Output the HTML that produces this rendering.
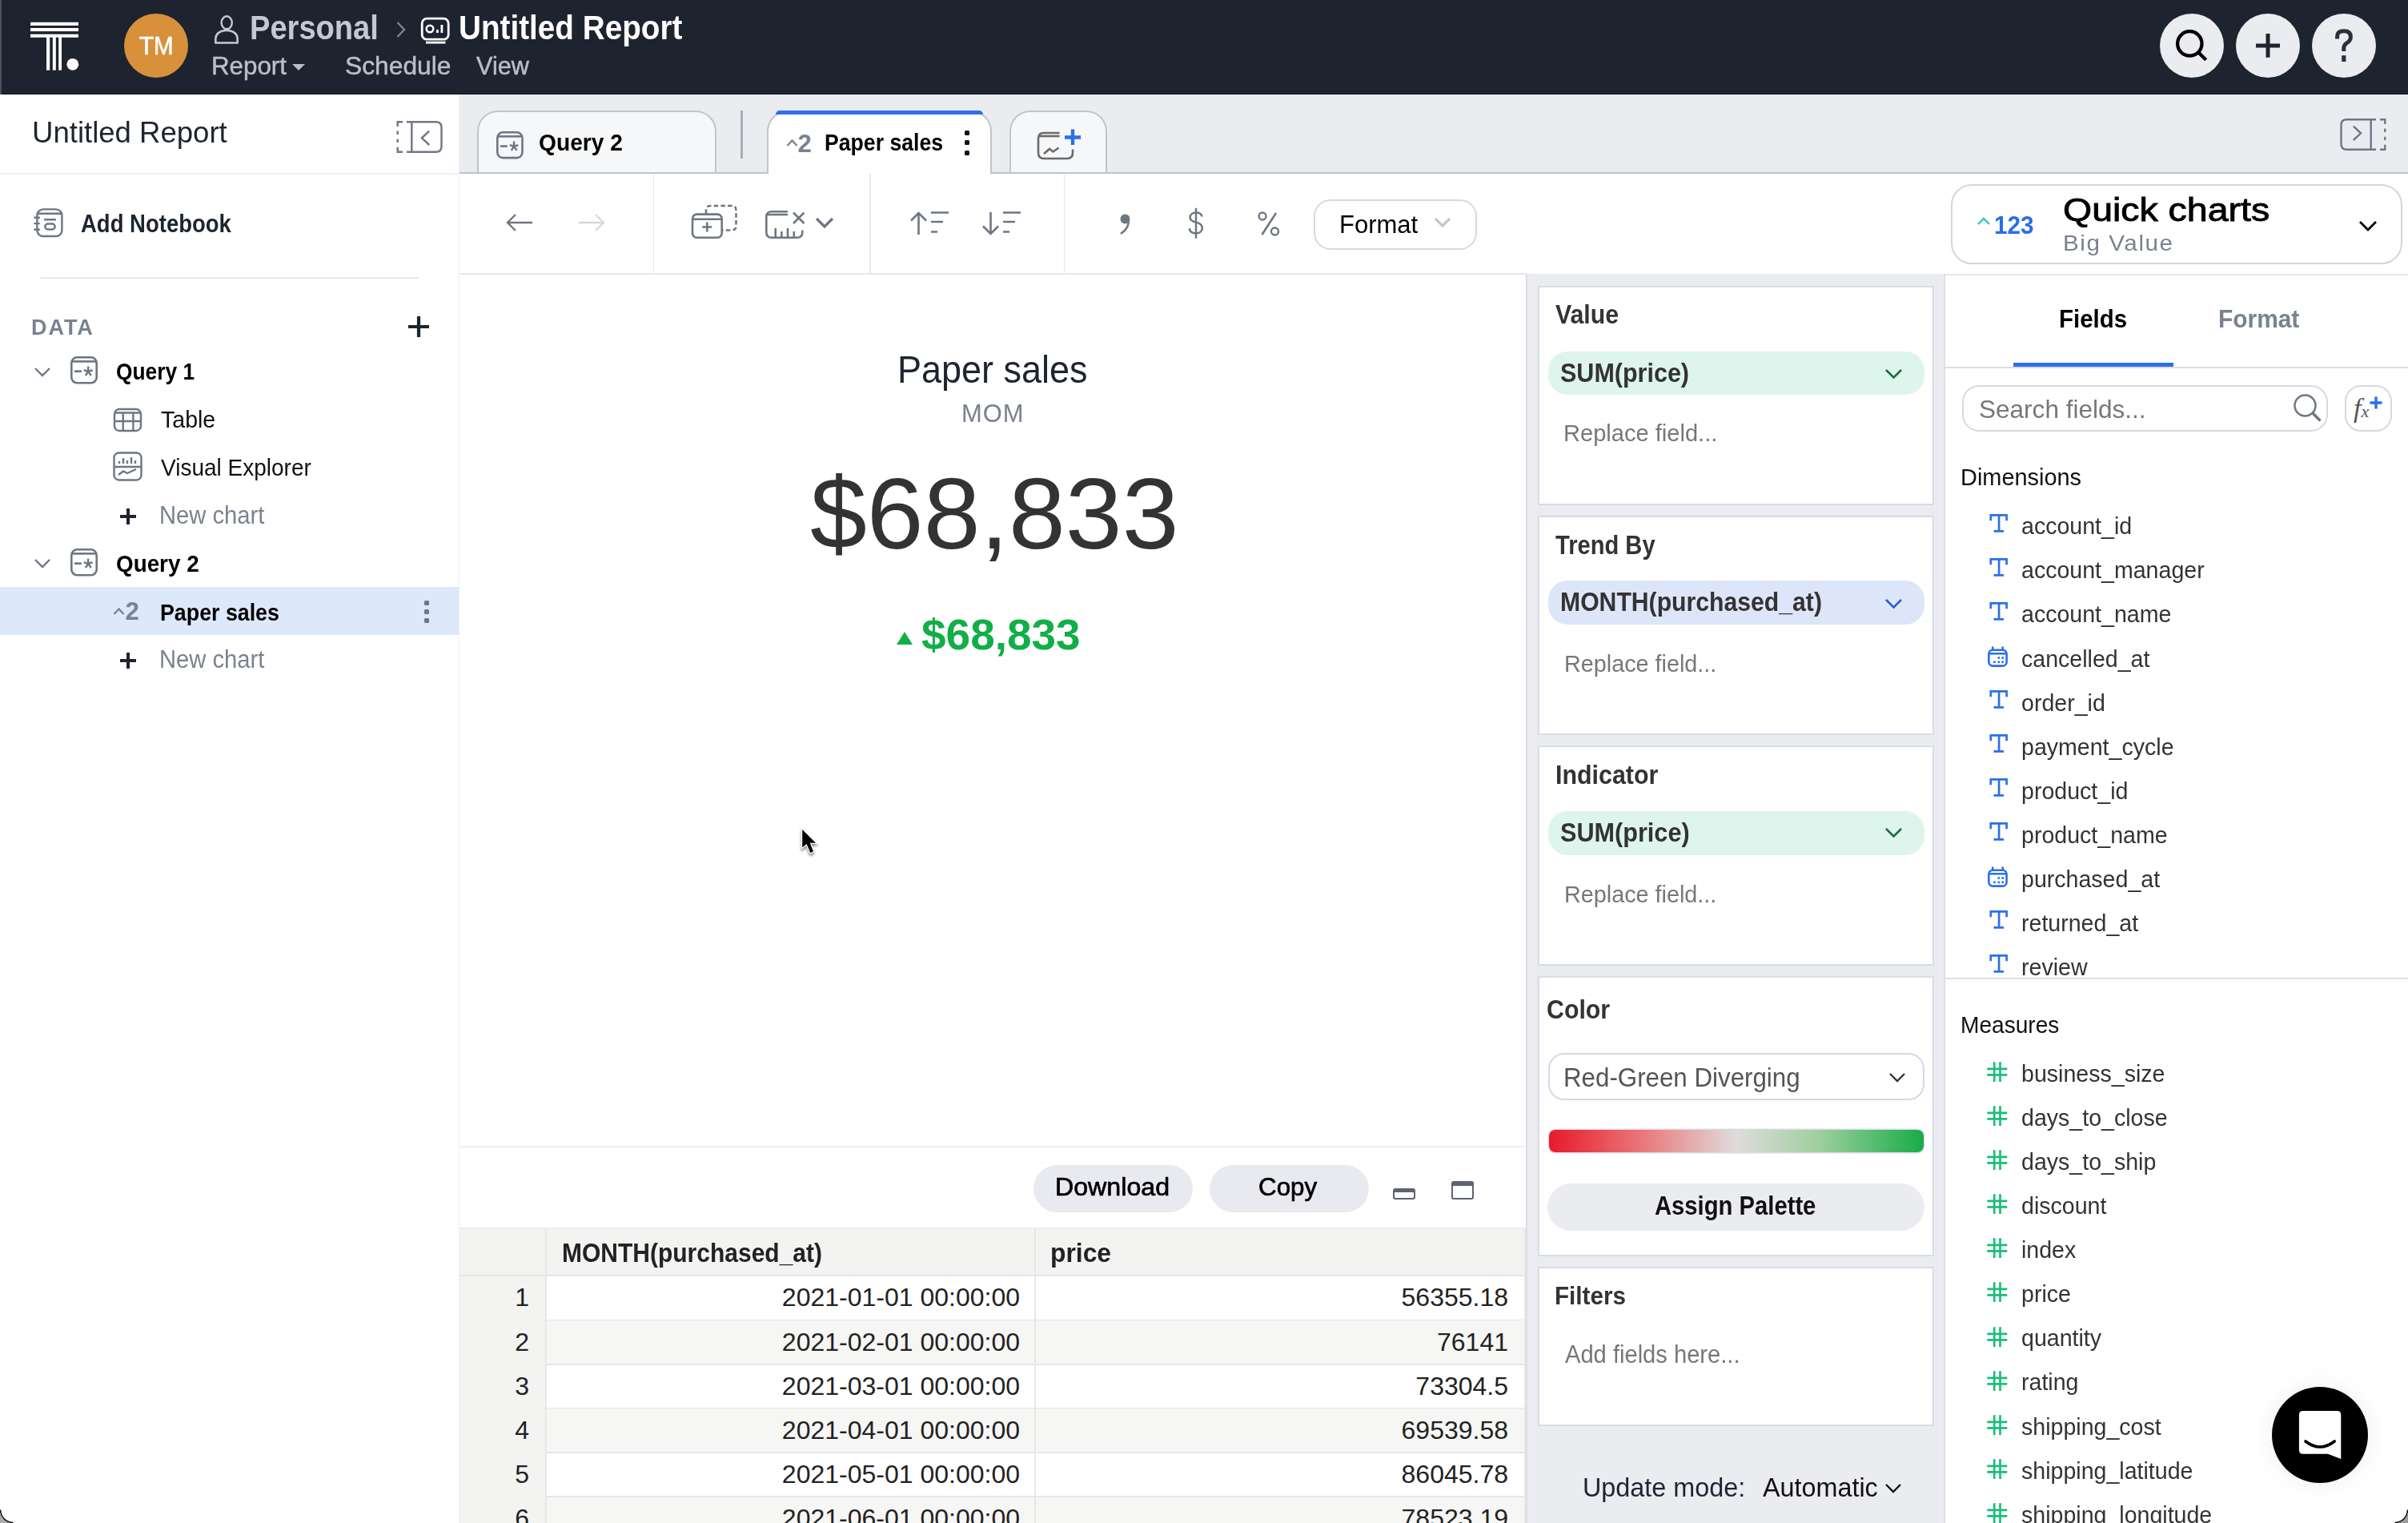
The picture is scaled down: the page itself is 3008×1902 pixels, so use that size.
<!DOCTYPE html>
<html><head><meta charset="utf-8"><style>
html,body{margin:0;padding:0;width:3008px;height:1902px;overflow:hidden;background:#fff;}
body{position:relative;font-family:"Liberation Sans",sans-serif;}
body>div,body>svg{position:absolute;box-sizing:border-box;}
.t{white-space:nowrap;transform-origin:0 0;}
</style></head><body>
<div style="left:0px;top:0px;width:3008px;height:118px;background:#1e2330;"></div>
<div style="left:0px;top:117px;width:3008px;height:1px;background:#10131b;"></div>
<div style="left:0px;top:0px;width:2px;height:118px;background:#4b505c;"></div>
<svg style="left:0;top:0" width="110" height="100" viewBox="0 0 110 100"><rect x="38" y="27.8" width="60" height="4.1" fill="#fff"/><rect x="38" y="35" width="60" height="4.1" fill="#fff"/><rect x="38" y="42.7" width="60" height="4.1" fill="#fff"/><rect x="58" y="45" width="4.2" height="42.7" fill="#fff"/><rect x="65.8" y="46" width="4" height="41.7" fill="#fff"/><rect x="73.2" y="46" width="3.8" height="41.7" fill="#fff"/><circle cx="90.8" cy="80.3" r="7.4" fill="#fff"/></svg>
<div style="left:155px;top:17px;width:80px;height:80px;background:#d8913a;border-radius:50%;"></div>
<div id="hTM" class="t" style="left:174.00px;top:41.55px;font-size:31px;line-height:31px;color:#fff;font-weight:400;transform:scaleX(0.9540);-webkit-text-stroke:0.6px #fff;">TM</div>
<svg style="left:266px;top:18px;" width="34" height="38" viewBox="0 0 34 38" fill="none"><ellipse cx="17.2" cy="10.3" rx="6.6" ry="8" stroke="#c3c8d1" stroke-width="2.4"/><path d="M3.3 35.5 V31 C3.3 24 9 20 17 20 C25 20 30.7 24 30.7 31 V35.5 Z" stroke="#c3c8d1" stroke-width="2.6" stroke-linejoin="round"/></svg>
<div id="hPersonal" class="t" style="left:312.23px;top:13.39px;font-size:43px;line-height:43px;color:#c3c8d1;font-weight:700;transform:scaleX(0.8854);">Personal</div>
<svg style="left:492px;top:24px;" width="18" height="26" viewBox="0 0 18 26" fill="none"><path d="M4.5 4 L13 13 L4.5 22" stroke="#7d838f" stroke-width="2.4"/></svg>
<svg style="left:524px;top:20px;" width="40" height="38" viewBox="0 0 40 38" fill="none"><rect x="3.2" y="3.2" width="33" height="26" rx="6" stroke="#fff" stroke-width="2.8"/><circle cx="13" cy="16" r="4.3" stroke="#fff" stroke-width="2.6"/><rect x="21" y="17" width="2.8" height="4" fill="#fff"/><rect x="26.5" y="11" width="2.8" height="10" fill="#fff"/><rect x="8" y="31.7" width="24.5" height="2.8" fill="#fff"/></svg>
<div id="hTitle" class="t" style="left:573.11px;top:13.39px;font-size:43px;line-height:43px;color:#fff;font-weight:700;transform:scaleX(0.8997);">Untitled Report</div>
<div id="hReport" class="t" style="left:264.02px;top:65.61px;font-size:32px;line-height:32px;color:#b9bfca;font-weight:400;transform:scaleX(0.9787);-webkit-text-stroke:0.5px #b9bfca;">Report</div>
<svg style="left:364px;top:79px;" width="18" height="10" viewBox="0 0 18 10" fill="none"><path d="M1 1 L17 1 L9 9 Z" fill="#b9bfca"/></svg>
<div id="hSched" class="t" style="left:430.94px;top:65.61px;font-size:32px;line-height:32px;color:#b9bfca;font-weight:400;transform:scaleX(0.9926);-webkit-text-stroke:0.5px #b9bfca;">Schedule</div>
<div id="hView" class="t" style="left:594.97px;top:65.61px;font-size:32px;line-height:32px;color:#b9bfca;font-weight:400;transform:scaleX(0.9574);-webkit-text-stroke:0.5px #b9bfca;">View</div>
<div style="left:2698px;top:17px;width:80px;height:80px;background:#ebecf0;border-radius:50%;"></div>
<div style="left:2793px;top:17px;width:80px;height:80px;background:#ebecf0;border-radius:50%;"></div>
<div style="left:2888px;top:17px;width:80px;height:80px;background:#ebecf0;border-radius:50%;"></div>
<svg style="left:2715px;top:34px;" width="48" height="48" viewBox="0 0 48 48" fill="none"><circle cx="20.3" cy="20.4" r="15.2" stroke="#000" stroke-width="4.3"/><path d="M31 31.3 L40.7 40.7" stroke="#000" stroke-width="4.3"/></svg>
<svg style="left:2811px;top:35px;" width="44" height="44" viewBox="0 0 44 44" fill="none"><path d="M22 7 V36.8 M7 21.9 H37" stroke="#1e2430" stroke-width="5"/></svg>
<svg style="left:2900px;top:30px;" width="56" height="56" viewBox="0 0 56 56" fill="none"><path d="M19.6 18.5 V15.3 Q19.6 8.8 28 8.8 Q36.4 8.8 36.4 16 Q36.4 20.8 32 23.3 Q27.8 25.8 27.8 30.5 V34" stroke="#2b303b" stroke-width="5"/><rect x="25.2" y="39.2" width="5.2" height="7.8" fill="#2b303b"/></svg>
<div style="left:0px;top:118px;width:574px;height:1784px;background:#fff;"></div>
<div style="left:573px;top:118px;width:1px;height:1784px;background:#eef0f3;"></div>
<div id="sTitle" class="t" style="left:40.00px;top:146.67px;font-size:37px;line-height:37px;color:#1e2430;font-weight:400;transform:scaleX(0.9878);">Untitled Report</div>
<div style="left:0px;top:216px;width:573px;height:2px;background:#eef0f4;"></div>
<div id="sAddNb" class="t" style="left:101.00px;top:263.55px;font-size:31px;line-height:31px;color:#1e2430;font-weight:700;transform:scaleX(0.8868);">Add Notebook</div>
<div style="left:50px;top:346px;width:473px;height:2px;background:#e8eaf0;"></div>
<div id="sData" class="t" style="left:39.02px;top:394.47px;font-size:28.5px;line-height:28.5px;color:#7a8290;font-weight:700;letter-spacing:2px;transform:scaleX(0.9498);">DATA</div>
<div style="left:0px;top:732.5px;width:573px;height:60.5px;background:#dde8fa;"></div>
<div id="sQ1" class="t" style="left:145.07px;top:448.92px;font-size:29.5px;line-height:29.5px;color:#000;font-weight:700;transform:scaleX(0.8939);">Query 1</div>
<div id="sTable" class="t" style="left:200.86px;top:508.72px;font-size:29.5px;line-height:29.5px;color:#111;font-weight:400;transform:scaleX(0.9674);">Table</div>
<div id="sVE" class="t" style="left:200.85px;top:568.92px;font-size:29.5px;line-height:29.5px;color:#111;font-weight:400;transform:scaleX(0.9493);">Visual Explorer</div>
<div id="sNC1" class="t" style="left:199.07px;top:627.75px;font-size:31px;line-height:31px;color:#7a8290;font-weight:400;transform:scaleX(0.9417);">New chart</div>
<div id="sQ2" class="t" style="left:145.05px;top:689.00px;font-size:30px;line-height:30px;color:#000;font-weight:700;transform:scaleX(0.9273);">Query 2</div>
<div id="sPS" class="t" style="left:200.02px;top:749.82px;font-size:29.5px;line-height:29.5px;color:#000;font-weight:700;transform:scaleX(0.9080);">Paper sales</div>
<div id="sNC2" class="t" style="left:199.07px;top:807.75px;font-size:31px;line-height:31px;color:#7a8290;font-weight:400;transform:scaleX(0.9417);">New chart</div>
<div style="left:574px;top:118px;width:2434px;height:99px;background:#ebecf0;"></div>
<div style="left:574px;top:215px;width:2434px;height:2.5px;background:#bfc4cc;"></div>
<div style="left:595.5px;top:138px;width:299px;height:77px;background:#f6f7f9;border:2px solid #bfc4cc;border-bottom:none;border-radius:26px 26px 0 0;"></div>
<div id="tQ2" class="t" style="left:673.02px;top:164.45px;font-size:29px;line-height:29px;color:#000;font-weight:700;transform:scaleX(0.9717);">Query 2</div>
<div style="left:924.5px;top:138px;width:3.5px;height:60px;background:#a9aeb8;"></div>
<div style="left:958px;top:138px;width:281px;height:80px;background:#fff;border:2px solid #bfc4cc;border-bottom:none;border-radius:26px 26px 0 0;"></div>
<div style="left:969px;top:137.5px;width:259px;height:5px;background:#2c6fec;border-radius:5px 5px 0 0;"></div>
<div id="tPS" class="t" style="left:1030.05px;top:164.45px;font-size:29px;line-height:29px;color:#000;font-weight:700;transform:scaleX(0.9183);">Paper sales</div>
<div style="left:1261px;top:138px;width:122px;height:77px;background:#f6f7f9;border:2px solid #bfc4cc;border-bottom:none;border-radius:26px 26px 0 0;"></div>
<div style="left:574px;top:217px;width:2434px;height:125px;background:#fff;"></div>
<div style="left:574px;top:340.5px;width:1332px;height:2px;background:#e6e8ed;"></div>
<div style="left:815.5px;top:217px;width:1.5px;height:124px;background:#e6e8ed;"></div>
<div style="left:1086px;top:217px;width:1.5px;height:124px;background:#e6e8ed;"></div>
<div style="left:1328.5px;top:217px;width:1.5px;height:124px;background:#e6e8ed;"></div>
<div style="left:1640.5px;top:248.5px;width:204px;height:63px;border:2px solid #d6d9e0;border-radius:21px;background:#fff;"></div>
<div id="tbFormat" class="t" style="left:1672.93px;top:264.75px;font-size:31px;line-height:31px;color:#000;font-weight:400;transform:scaleX(1.0001);">Format</div>
<div style="left:2436.5px;top:230px;width:564px;height:99.5px;border:2px solid #d3d6dd;border-radius:26px;background:#fff;"></div>
<div id="qc123" class="t" style="left:2491.08px;top:266.15px;font-size:31px;line-height:31px;color:#2b6de8;font-weight:700;transform:scaleX(0.9592);">123</div>
<div id="qcTitle" class="t" style="left:2576.80px;top:241.79px;font-size:41px;line-height:41px;color:#000;font-weight:400;transform:scaleX(1.1328);-webkit-text-stroke:0.9px #000;">Quick charts</div>
<div id="qcSub" class="t" style="left:2576.88px;top:288.87px;font-size:28.5px;line-height:28.5px;color:#7a8290;font-weight:400;letter-spacing:1.5px;transform:scaleX(1.0389);">Big Value</div>
<div id="cTitle" class="t" style="left:1121.12px;top:437.78px;font-size:47.5px;line-height:47.5px;color:#1e2430;font-weight:400;transform:scaleX(0.9472);">Paper sales</div>
<div id="cMOM" class="t" style="left:1200.89px;top:500.98px;font-size:30.5px;line-height:30.5px;color:#7a8290;font-weight:400;letter-spacing:1px;transform:scaleX(1.0139);">MOM</div>
<div id="cBig" class="t" style="left:1011.97px;top:578.72px;font-size:126px;line-height:126px;color:#333;font-weight:400;transform:scaleX(1.0111);">$68,833</div>
<svg style="left:1119px;top:788px;" width="22" height="18" viewBox="0 0 22 18" fill="none"><path d="M1 17 L11 1 L21 17 Z" fill="#12ae48"/></svg>
<div id="cGreen" class="t" style="left:1150.93px;top:766.12px;font-size:53px;line-height:53px;color:#12ae48;font-weight:700;transform:scaleX(1.0369);">$68,833</div>
<div style="left:574px;top:1431px;width:1332px;height:2px;background:#eef0f2;"></div>
<div style="left:1290.5px;top:1455px;width:199px;height:58.5px;background:#e9eaef;border-radius:30px;"></div>
<div id="bDl" class="t" style="left:1317.94px;top:1466.11px;font-size:32px;line-height:32px;color:#000;font-weight:400;transform:scaleX(1.0051);-webkit-text-stroke:0.7px #000;">Download</div>
<div style="left:1510.5px;top:1455px;width:199px;height:58.5px;background:#e9eaef;border-radius:30px;"></div>
<div id="bCopy" class="t" style="left:1572.00px;top:1466.11px;font-size:32px;line-height:32px;color:#000;font-weight:400;transform:scaleX(0.9796);-webkit-text-stroke:0.7px #000;">Copy</div>
<div style="left:574px;top:1533px;width:1332px;height:369px;background:#fff;"></div>
<div style="left:574px;top:1533px;width:1332px;height:1.5px;background:#eceeee;"></div>
<div style="left:574px;top:1534.5px;width:1332px;height:58px;background:#f3f3f2;"></div>
<div style="left:574px;top:1534.5px;width:107.5px;height:368px;background:#f3f3f2;"></div>
<div style="left:574px;top:1591.5px;width:1332px;height:2px;background:#e7e7e5;"></div>
<div id="thM" class="t" style="left:702.19px;top:1546.81px;font-size:34px;line-height:34px;color:#222;font-weight:700;transform:scaleX(0.8822);">MONTH(purchased_at)</div>
<div id="thP" class="t" style="left:1312.11px;top:1546.81px;font-size:34px;line-height:34px;color:#222;font-weight:700;transform:scaleX(0.9359);">price</div>
<div style="left:683px;top:1647.5px;width:1223px;height:2px;background:#e7e7e5;"></div>
<div class="t" style="left:574px;width:87px;text-align:right;top:1604.4px;font-size:32px;line-height:32px;color:#222;">1</div>
<div class="t" style="left:683px;width:591px;text-align:right;top:1604.4px;font-size:32px;line-height:32px;color:#222;">2021-01-01 00:00:00</div>
<div class="t" style="left:1294px;width:590px;text-align:right;top:1604.4px;font-size:32px;line-height:32px;color:#222;">56355.18</div>
<div style="left:683px;top:1648.7px;width:1223px;height:54px;background:#f6f6f4;"></div>
<div style="left:683px;top:1702.7px;width:1223px;height:2px;background:#e7e7e5;"></div>
<div class="t" style="left:574px;width:87px;text-align:right;top:1659.6px;font-size:32px;line-height:32px;color:#222;">2</div>
<div class="t" style="left:683px;width:591px;text-align:right;top:1659.6px;font-size:32px;line-height:32px;color:#222;">2021-02-01 00:00:00</div>
<div class="t" style="left:1294px;width:590px;text-align:right;top:1659.6px;font-size:32px;line-height:32px;color:#222;">76141</div>
<div style="left:683px;top:1757.9px;width:1223px;height:2px;background:#e7e7e5;"></div>
<div class="t" style="left:574px;width:87px;text-align:right;top:1714.8px;font-size:32px;line-height:32px;color:#222;">3</div>
<div class="t" style="left:683px;width:591px;text-align:right;top:1714.8px;font-size:32px;line-height:32px;color:#222;">2021-03-01 00:00:00</div>
<div class="t" style="left:1294px;width:590px;text-align:right;top:1714.8px;font-size:32px;line-height:32px;color:#222;">73304.5</div>
<div style="left:683px;top:1759.1px;width:1223px;height:54px;background:#f6f6f4;"></div>
<div style="left:683px;top:1813.1px;width:1223px;height:2px;background:#e7e7e5;"></div>
<div class="t" style="left:574px;width:87px;text-align:right;top:1770.0px;font-size:32px;line-height:32px;color:#222;">4</div>
<div class="t" style="left:683px;width:591px;text-align:right;top:1770.0px;font-size:32px;line-height:32px;color:#222;">2021-04-01 00:00:00</div>
<div class="t" style="left:1294px;width:590px;text-align:right;top:1770.0px;font-size:32px;line-height:32px;color:#222;">69539.58</div>
<div style="left:683px;top:1868.3px;width:1223px;height:2px;background:#e7e7e5;"></div>
<div class="t" style="left:574px;width:87px;text-align:right;top:1825.2px;font-size:32px;line-height:32px;color:#222;">5</div>
<div class="t" style="left:683px;width:591px;text-align:right;top:1825.2px;font-size:32px;line-height:32px;color:#222;">2021-05-01 00:00:00</div>
<div class="t" style="left:1294px;width:590px;text-align:right;top:1825.2px;font-size:32px;line-height:32px;color:#222;">86045.78</div>
<div style="left:683px;top:1869.5px;width:1223px;height:54px;background:#f6f6f4;"></div>
<div style="left:683px;top:1923.5px;width:1223px;height:2px;background:#e7e7e5;"></div>
<div class="t" style="left:574px;width:87px;text-align:right;top:1880.4px;font-size:32px;line-height:32px;color:#222;">6</div>
<div class="t" style="left:683px;width:591px;text-align:right;top:1880.4px;font-size:32px;line-height:32px;color:#222;">2021-06-01 00:00:00</div>
<div class="t" style="left:1294px;width:590px;text-align:right;top:1880.4px;font-size:32px;line-height:32px;color:#222;">78523.19</div>
<div style="left:681px;top:1534.5px;width:2px;height:368px;background:#e7e7e5;"></div>
<div style="left:1292.4px;top:1534.5px;width:2px;height:368px;background:#e7e7e5;"></div>
<div style="left:1903.5px;top:1534.5px;width:2px;height:368px;background:#e7e7e5;"></div>
<div style="left:1906px;top:342px;width:524px;height:1560px;background:#ebecf0;"></div>
<div style="left:1906px;top:342px;width:2px;height:1560px;background:#dcdfe5;"></div>
<div style="left:2428px;top:342px;width:2px;height:1560px;background:#dcdfe5;"></div>
<div style="left:1920.5px;top:356.5px;width:495px;height:274.0px;background:#fff;border:2px solid #d8dce6;"></div>
<div style="left:1920.5px;top:644px;width:495px;height:273.5px;background:#fff;border:2px solid #d8dce6;"></div>
<div style="left:1920.5px;top:931px;width:495px;height:275px;background:#fff;border:2px solid #d8dce6;"></div>
<div style="left:1920.5px;top:1219px;width:495px;height:349.5px;background:#fff;border:2px solid #d8dce6;"></div>
<div style="left:1920.5px;top:1581.5px;width:495px;height:199.0px;background:#fff;border:2px solid #d8dce6;"></div>
<div id="cfVal" class="t" style="left:1943.00px;top:376.06px;font-size:33px;line-height:33px;color:#333;font-weight:700;transform:scaleX(0.9178);">Value</div>
<div style="left:1933.5px;top:438.5px;width:470px;height:54px;background:#def5ed;border-radius:24px;"></div>
<div id="cfSum1" class="t" style="left:1948.96px;top:448.76px;font-size:33px;line-height:33px;color:#333;font-weight:700;transform:scaleX(0.9245);">SUM(price)</div>
<div id="cfR1" class="t" style="left:1953.05px;top:526.20px;font-size:30px;line-height:30px;color:#777;font-weight:400;transform:scaleX(0.9691);">Replace field...</div>
<div id="cfTrend" class="t" style="left:1943.16px;top:663.56px;font-size:33px;line-height:33px;color:#333;font-weight:700;transform:scaleX(0.8823);">Trend By</div>
<div style="left:1933.5px;top:725.2px;width:470px;height:54.6px;background:#dde6f8;border-radius:24px;"></div>
<div id="cfMonth" class="t" style="left:1948.78px;top:735.26px;font-size:33px;line-height:33px;color:#333;font-weight:700;transform:scaleX(0.9144);">MONTH(purchased_at)</div>
<div id="cfR2" class="t" style="left:1954.05px;top:813.60px;font-size:30px;line-height:30px;color:#777;font-weight:400;transform:scaleX(0.9588);">Replace field...</div>
<div id="cfInd" class="t" style="left:1942.66px;top:951.06px;font-size:33px;line-height:33px;color:#333;font-weight:700;transform:scaleX(0.9212);">Indicator</div>
<div style="left:1933.5px;top:1013px;width:470px;height:54.5px;background:#def5ed;border-radius:24px;"></div>
<div id="cfSum2" class="t" style="left:1948.96px;top:1023.06px;font-size:33px;line-height:33px;color:#333;font-weight:700;transform:scaleX(0.9279);">SUM(price)</div>
<div id="cfR3" class="t" style="left:1954.05px;top:1101.60px;font-size:30px;line-height:30px;color:#777;font-weight:400;transform:scaleX(0.9588);">Replace field...</div>
<div id="cfColor" class="t" style="left:1932.04px;top:1243.56px;font-size:33px;line-height:33px;color:#333;font-weight:700;transform:scaleX(0.9180);">Color</div>
<div style="left:1933.5px;top:1315px;width:470px;height:59px;border:2px solid #d6d9e0;border-radius:20px;background:#fff;"></div>
<div id="cfRG" class="t" style="left:1953.06px;top:1328.76px;font-size:33px;line-height:33px;color:#555;font-weight:400;transform:scaleX(0.9481);">Red-Green Diverging</div>
<div style="left:1934.5px;top:1411px;width:468px;height:28px;border-radius:8px;background:linear-gradient(90deg,#e8192c 0%,#e9787a 25%,#e0dcdc 50%,#9fcf9f 72%,#18ab48 100%);box-shadow:0 0 0 1.5px #d9dce4;"></div>
<div style="left:1933px;top:1478px;width:470.5px;height:58.5px;background:#ebecf0;border-radius:30px;"></div>
<div id="cfAssign" class="t" style="left:2067.00px;top:1488.76px;font-size:33px;line-height:33px;color:#111;font-weight:700;transform:scaleX(0.8855);">Assign Palette</div>
<div id="cfFilters" class="t" style="left:1941.95px;top:1602.55px;font-size:31px;line-height:31px;color:#333;font-weight:700;transform:scaleX(0.9564);">Filters</div>
<div id="cfAdd" class="t" style="left:1955.00px;top:1676.25px;font-size:31px;line-height:31px;color:#777;font-weight:400;transform:scaleX(0.9391);">Add fields here...</div>
<div id="cfUpd" class="t" style="left:1976.96px;top:1840.56px;font-size:33px;line-height:33px;color:#1e2430;font-weight:400;transform:scaleX(0.9803);">Update mode:</div>
<div id="cfAuto" class="t" style="left:2202.00px;top:1840.56px;font-size:33px;line-height:33px;color:#111;font-weight:400;transform:scaleX(0.9795);">Automatic</div>
<div style="left:2430px;top:342px;width:578px;height:1560px;background:#fff;"></div>
<div style="left:2430px;top:342px;width:578px;height:2px;background:#e6e8ed;"></div>
<div id="fFields" class="t" style="left:2571.96px;top:382.98px;font-size:30.5px;line-height:30.5px;color:#000;font-weight:700;transform:scaleX(0.9654);">Fields</div>
<div id="fFormat" class="t" style="left:2771.02px;top:382.98px;font-size:30.5px;line-height:30.5px;color:#7a8290;font-weight:700;transform:scaleX(0.9802);">Format</div>
<div style="left:2430px;top:457.5px;width:578px;height:2px;background:#dcdfe6;"></div>
<div style="left:2515px;top:453px;width:200px;height:5px;background:#2c6fec;"></div>
<div style="left:2451px;top:480.5px;width:456.5px;height:58.5px;border:2px solid #d6d9e0;border-radius:21px;background:#fff;"></div>
<div id="fSearch" class="t" style="left:2471.94px;top:494.91px;font-size:32px;line-height:32px;color:#777;font-weight:400;transform:scaleX(0.9856);">Search fields...</div>
<div style="left:2929px;top:480.5px;width:58.5px;height:58.5px;border:2px solid #d6d9e0;border-radius:20px;background:#fff;"></div>
<div id="fDims" class="t" style="left:2449.02px;top:581.02px;font-size:29.5px;line-height:29.5px;color:#111;font-weight:400;transform:scaleX(0.9801);">Dimensions</div>
<div id="fd0" class="t" style="left:2525.00px;top:643.35px;font-size:29px;line-height:29px;color:#333;font-weight:400;transform:scaleX(0.9850);">account_id</div>
<div id="fd1" class="t" style="left:2525.00px;top:698.40px;font-size:29px;line-height:29px;color:#333;font-weight:400;transform:scaleX(0.9850);">account_manager</div>
<div id="fd2" class="t" style="left:2525.00px;top:753.45px;font-size:29px;line-height:29px;color:#333;font-weight:400;transform:scaleX(0.9850);">account_name</div>
<div id="fd3" class="t" style="left:2525.00px;top:808.50px;font-size:29px;line-height:29px;color:#333;font-weight:400;transform:scaleX(0.9850);">cancelled_at</div>
<div id="fd4" class="t" style="left:2525.00px;top:863.55px;font-size:29px;line-height:29px;color:#333;font-weight:400;transform:scaleX(0.9850);">order_id</div>
<div id="fd5" class="t" style="left:2525.00px;top:918.60px;font-size:29px;line-height:29px;color:#333;font-weight:400;transform:scaleX(0.9850);">payment_cycle</div>
<div id="fd6" class="t" style="left:2525.00px;top:973.65px;font-size:29px;line-height:29px;color:#333;font-weight:400;transform:scaleX(0.9850);">product_id</div>
<div id="fd7" class="t" style="left:2525.00px;top:1028.70px;font-size:29px;line-height:29px;color:#333;font-weight:400;transform:scaleX(0.9850);">product_name</div>
<div id="fd8" class="t" style="left:2525.00px;top:1083.75px;font-size:29px;line-height:29px;color:#333;font-weight:400;transform:scaleX(0.9850);">purchased_at</div>
<div id="fd9" class="t" style="left:2525.00px;top:1138.80px;font-size:29px;line-height:29px;color:#333;font-weight:400;transform:scaleX(0.9850);">returned_at</div>
<div id="fd10" class="t" style="left:2525.00px;top:1193.85px;font-size:29px;line-height:29px;color:#333;font-weight:400;transform:scaleX(0.9850);">review</div>
<div style="left:2430px;top:1221px;width:578px;height:681px;background:#fff;"></div>
<div style="left:2430px;top:1220.5px;width:578px;height:2px;background:#dcdfe6;"></div>
<div id="fMeas" class="t" style="left:2449.01px;top:1264.82px;font-size:29.5px;line-height:29.5px;color:#111;font-weight:400;transform:scaleX(0.9528);">Measures</div>
<div id="fm0" class="t" style="left:2525.00px;top:1326.75px;font-size:29px;line-height:29px;color:#333;font-weight:400;transform:scaleX(0.9850);">business_size</div>
<div id="fm1" class="t" style="left:2525.00px;top:1381.85px;font-size:29px;line-height:29px;color:#333;font-weight:400;transform:scaleX(0.9850);">days_to_close</div>
<div id="fm2" class="t" style="left:2525.00px;top:1436.95px;font-size:29px;line-height:29px;color:#333;font-weight:400;transform:scaleX(0.9850);">days_to_ship</div>
<div id="fm3" class="t" style="left:2525.00px;top:1492.05px;font-size:29px;line-height:29px;color:#333;font-weight:400;transform:scaleX(0.9850);">discount</div>
<div id="fm4" class="t" style="left:2525.00px;top:1547.15px;font-size:29px;line-height:29px;color:#333;font-weight:400;transform:scaleX(0.9850);">index</div>
<div id="fm5" class="t" style="left:2525.00px;top:1602.25px;font-size:29px;line-height:29px;color:#333;font-weight:400;transform:scaleX(0.9850);">price</div>
<div id="fm6" class="t" style="left:2525.00px;top:1657.35px;font-size:29px;line-height:29px;color:#333;font-weight:400;transform:scaleX(0.9850);">quantity</div>
<div id="fm7" class="t" style="left:2525.00px;top:1712.45px;font-size:29px;line-height:29px;color:#333;font-weight:400;transform:scaleX(0.9850);">rating</div>
<div id="fm8" class="t" style="left:2525.00px;top:1767.55px;font-size:29px;line-height:29px;color:#333;font-weight:400;transform:scaleX(0.9850);">shipping_cost</div>
<div id="fm9" class="t" style="left:2525.00px;top:1822.65px;font-size:29px;line-height:29px;color:#333;font-weight:400;transform:scaleX(0.9850);">shipping_latitude</div>
<div id="fm10" class="t" style="left:2525.00px;top:1877.75px;font-size:29px;line-height:29px;color:#333;font-weight:400;transform:scaleX(0.9850);">shipping_longitude</div>
<svg style="left:485px;top:140px;" width="80" height="60" viewBox="0 0 80 60" fill="none"><path d="M17.9 12.2 H11.7 V18.1 M11.7 23.6 V28.1 M11.7 33.7 V38 M11.7 43.7 V49.8 H17.9" stroke="#6f7683" stroke-width="2.4"/><path d="M23 12.2 H59.5 Q66.5 12.2 66.5 19.2 V42.8 Q66.5 49.8 59.5 49.8 H23 M29.3 12.2 V49.8" stroke="#6f7683" stroke-width="2.4"/><path d="M51.2 23.6 L41.9 32.3 L51.2 41" stroke="#6f7683" stroke-width="2.4"/></svg>
<svg style="left:40px;top:255px;" width="44" height="44" viewBox="0 0 44 44" fill="none"><rect x="6.4" y="6.4" width="31" height="33.6" rx="7.5" stroke="#6f7683" stroke-width="2.4"/><path d="M6.8 11.8 H37 M2.4 16.8 H9.8 M2.4 24.1 H9.8 M2.4 31.8 H9.8 M15.1 19.2 H29.9" stroke="#6f7683" stroke-width="2.4"/><rect x="16.3" y="24.5" width="12.4" height="7" rx="3.5" stroke="#6f7683" stroke-width="2.4"/></svg>
<svg style="left:508px;top:393px;" width="30" height="30" viewBox="0 0 30 30" fill="none"><path d="M15 2 V28 M2 15 H28" stroke="#1e2430" stroke-width="4.2"/></svg>
<svg style="left:41px;top:456.5px;" width="24" height="16" viewBox="0 0 24 16" fill="none"><path d="M3 3 L12 12 L21 3" stroke="#6f7683" stroke-width="2.4"/></svg>
<svg style="left:41px;top:696px;" width="24" height="16" viewBox="0 0 24 16" fill="none"><path d="M3 3 L12 12 L21 3" stroke="#6f7683" stroke-width="2.4"/></svg>
<svg style="left:86px;top:443.4px;" width="38" height="38" viewBox="0 0 38 38" fill="none"><g transform="translate(2 2) scale(1.0)"><rect x="1.3" y="1.3" width="31.4" height="32" rx="7" stroke="#6f7683" stroke-width="2.6"/><path d="M1.8 6.4 H32.2" stroke="#6f7683" stroke-width="2.6"/><path d="M4.9 18.7 H13.9" stroke="#6f7683" stroke-width="2.6"/><path d="M22.2 12.6 V18.9 M22.2 18.9 L16.8 17.3 M22.2 18.9 L27.6 17.3 M22.2 18.9 L18.9 24 M22.2 18.9 L25.7 24" stroke="#6f7683" stroke-width="2.4699999999999998" stroke-linecap="butt"/></g></svg>
<svg style="left:86px;top:683.4px;" width="38" height="38" viewBox="0 0 38 38" fill="none"><g transform="translate(2 2) scale(1.0)"><rect x="1.3" y="1.3" width="31.4" height="32" rx="7" stroke="#6f7683" stroke-width="2.6"/><path d="M1.8 6.4 H32.2" stroke="#6f7683" stroke-width="2.6"/><path d="M4.9 18.7 H13.9" stroke="#6f7683" stroke-width="2.6"/><path d="M22.2 12.6 V18.9 M22.2 18.9 L16.8 17.3 M22.2 18.9 L27.6 17.3 M22.2 18.9 L18.9 24 M22.2 18.9 L25.7 24" stroke="#6f7683" stroke-width="2.4699999999999998" stroke-linecap="butt"/></g></svg>
<svg style="left:141px;top:509px;" width="37" height="31" viewBox="0 0 37 31" fill="none"><rect x="2" y="2" width="33" height="27" rx="6" stroke="#6f7683" stroke-width="2.4"/><path d="M3 6.5 H34 M2 17 H35 M12.7 6.5 V29 M25.4 6.5 V29" stroke="#6f7683" stroke-width="2.4"/></svg>
<svg style="left:141px;top:564px;" width="37" height="37" viewBox="0 0 37 37" fill="none"><rect x="1.5" y="1.5" width="34" height="34" rx="6" stroke="#6f7683" stroke-width="2.4"/><path d="M2 19 H35" stroke="#6f7683" stroke-width="2.4"/><path d="M8 15 V12 M13 15 V8 M18 15 V11 M23 15 V7 M28 15 V11" stroke="#6f7683" stroke-width="2.4"/><path d="M7 29 L13 24.5 L18 27 L29 22" stroke="#6f7683" stroke-width="2.4"/></svg>
<svg style="left:148px;top:632.5px;" width="24" height="24" viewBox="0 0 24 24" fill="none"><path d="M12 2 V22 M2 12 H22" stroke="#1e2430" stroke-width="4"/></svg>
<svg style="left:148px;top:812.5px;" width="24" height="24" viewBox="0 0 24 24" fill="none"><path d="M12 2 V22 M2 12 H22" stroke="#1e2430" stroke-width="4"/></svg>
<svg style="left:141px;top:756.5px;" width="16" height="12" viewBox="0 0 16 12" fill="none"><path d="M1.5 10 L7.5 3.5 L13.5 10" stroke="#7a8290" stroke-width="2.3"/></svg>
<div class="t" style="left:156.5px;top:748.3px;font-size:31px;line-height:31px;color:#7a8290;font-weight:700;">2</div>
<div style="left:530px;top:749.5px;width:6px;height:6px;background:#6f7683;border-radius:1.5px;"></div>
<div style="left:530px;top:760.5px;width:6px;height:6px;background:#6f7683;border-radius:1.5px;"></div>
<div style="left:530px;top:771.5px;width:6px;height:6px;background:#6f7683;border-radius:1.5px;"></div>
<svg style="left:617.8px;top:162px;" width="37.8" height="37.8" viewBox="0 0 37.8 37.8" fill="none"><g transform="translate(2 2) scale(0.9941176470588234)"><rect x="1.3" y="1.3" width="31.4" height="32" rx="7" stroke="#6f7683" stroke-width="2.6"/><path d="M1.8 6.4 H32.2" stroke="#6f7683" stroke-width="2.6"/><path d="M4.9 18.7 H13.9" stroke="#6f7683" stroke-width="2.6"/><path d="M22.2 12.6 V18.9 M22.2 18.9 L16.8 17.3 M22.2 18.9 L27.6 17.3 M22.2 18.9 L18.9 24 M22.2 18.9 L25.7 24" stroke="#6f7683" stroke-width="2.4699999999999998" stroke-linecap="butt"/></g></svg>
<svg style="left:982px;top:171.5px;" width="16" height="12" viewBox="0 0 16 12" fill="none"><path d="M1.5 10 L7.5 3.5 L13.5 10" stroke="#7a8290" stroke-width="2.3"/></svg>
<div class="t" style="left:996.5px;top:163.8px;font-size:31px;line-height:31px;color:#7a8290;font-weight:700;">2</div>
<div style="left:1205px;top:163px;width:6px;height:6px;background:#111;border-radius:1.5px;"></div>
<div style="left:1205px;top:175.3px;width:6px;height:6px;background:#111;border-radius:1.5px;"></div>
<div style="left:1205px;top:187.5px;width:6px;height:6px;background:#111;border-radius:1.5px;"></div>
<svg style="left:1290px;top:158px;" width="64" height="44" viewBox="0 0 64 44" fill="none"><path d="M50 28.5 V33 Q50 40 43 40 H14 Q7 40 7 33 V15 Q7 8 14 8 H33.5" stroke="#6a6a6a" stroke-width="2.6"/><path d="M7.5 12 H33.5" stroke="#6a6a6a" stroke-width="2.6"/><path d="M14 34 L21 28 L25.5 31.5 L32.5 26.5" stroke="#6a6a6a" stroke-width="2.6"/><path d="M50 3.5 V23 M40 13.5 H60" stroke="#2c6fec" stroke-width="4.4"/></svg>
<svg style="left:2911.4px;top:136.7px;" width="80" height="60" viewBox="0 0 80 60" fill="none"><g transform="translate(80 0) scale(-1 1)"><path d="M17.9 12.2 H11.7 V18.1 M11.7 23.6 V28.1 M11.7 33.7 V38 M11.7 43.7 V49.8 H17.9" stroke="#6f7683" stroke-width="2.4"/><path d="M23 12.2 H59.5 Q66.5 12.2 66.5 19.2 V42.8 Q66.5 49.8 59.5 49.8 H23 M29.3 12.2 V49.8" stroke="#6f7683" stroke-width="2.4"/><path d="M51.2 20.6 L41.9 29.3 L51.2 38" stroke="#6f7683" stroke-width="2.4"/></g></svg>
<svg style="left:630px;top:265px;" width="38" height="26" viewBox="0 0 38 26" fill="none"><path d="M35 13 H4 M14 3 L4 13 L14 23" stroke="#6f7683" stroke-width="2.4"/></svg>
<svg style="left:720px;top:265px;" width="38" height="26" viewBox="0 0 38 26" fill="none"><path d="M3 13 H34 M24 3 L34 13 L24 23" stroke="#d5d8de" stroke-width="2.4"/></svg>
<svg style="left:860px;top:252px;" width="64" height="50" viewBox="0 0 64 50" fill="none"><path d="M22 15 V10.5 Q22 5 27.5 5 H54 Q59.5 5 59.5 10.5 V30 Q59.5 35.5 54 35.5 H42.5" stroke="#6f7683" stroke-width="2.6" stroke-dasharray="5.5 3.2"/><rect x="5" y="15.6" width="36.7" height="29.2" rx="5.5" stroke="#6f7683" stroke-width="2.6"/><path d="M5.5 21.8 H41" stroke="#6f7683" stroke-width="2.6"/><path d="M23.3 25.5 V37.5 M17.3 31.5 H29.3" stroke="#6f7683" stroke-width="2.6"/></svg>
<svg style="left:953px;top:258px;" width="56" height="42" viewBox="0 0 56 42" fill="none"><path d="M31 6.3 H11 Q4.3 6.3 4.3 13 V32 Q4.3 38.8 11 38.8 H42.5 Q49.3 38.8 49.3 32 V29.5" stroke="#6f7683" stroke-width="2.6"/><path d="M4.8 10 H31" stroke="#6f7683" stroke-width="2.6"/><path d="M15.7 27 V38 M23.4 31 V38 M31 27 V38 M38.8 31 V38" stroke="#6f7683" stroke-width="2.6"/><path d="M38 7.5 L51.5 21 M51.5 7.5 L38 21" stroke="#6f7683" stroke-width="2.6"/></svg>
<svg style="left:1017px;top:270px;" width="26" height="17" viewBox="0 0 26 17" fill="none"><path d="M3 3 L13 13 L23 3" stroke="#6f7683" stroke-width="3.2"/></svg>
<svg style="left:1136px;top:263px;" width="52" height="32" viewBox="0 0 52 32" fill="none"><path d="M11.5 30 V3 M2 12.5 L11.5 3 L21 12.5" stroke="#6f7683" stroke-width="2.6"/><path d="M27 2.5 H49 M27 14 H42 M27 26.5 H35" stroke="#6f7683" stroke-width="2.6"/></svg>
<svg style="left:1226px;top:263px;" width="52" height="32" viewBox="0 0 52 32" fill="none"><path d="M11.5 2 V29 M2 19.5 L11.5 29 L21 19.5" stroke="#6f7683" stroke-width="2.6"/><path d="M27 2.5 H49 M27 14 H42 M27 26.5 H35" stroke="#6f7683" stroke-width="2.6"/></svg>
<svg style="left:1396px;top:265px;" width="20" height="30" viewBox="0 0 20 30" fill="none"><circle cx="9.5" cy="8.5" r="6" fill="#6f7683"/><path d="M13.5 9 Q15.5 19 4 27" stroke="#6f7683" stroke-width="2.6"/></svg>
<svg style="left:1482px;top:258px;" width="24" height="42" viewBox="0 0 24 42" fill="none"><path d="M12 1.8 V39.7" stroke="#6f7683" stroke-width="2.5"/><path d="M19.6 12.5 C18.8 9.3 15.8 7.6 12 7.6 C7.6 7.6 4.6 9.9 4.6 13.4 C4.6 17.2 8 18.6 12 19.6 C16.6 20.7 19.8 22.6 19.8 26.7 C19.8 30.7 16.6 33.4 12 33.4 C7.5 33.4 4.3 31 3.6 27.2" stroke="#6f7683" stroke-width="2.5"/></svg>
<svg style="left:1569px;top:262px;" width="32" height="36" viewBox="0 0 32 36" fill="none"><circle cx="8" cy="8" r="4.5" stroke="#6f7683" stroke-width="2.4"/><circle cx="23.5" cy="27" r="4.5" stroke="#6f7683" stroke-width="2.4"/><path d="M25 4 L7.5 31" stroke="#6f7683" stroke-width="2.6"/></svg>
<svg style="left:1790px;top:270px;" width="24" height="17" viewBox="0 0 24 17" fill="none"><path d="M3 3 L12 12 L21 3" stroke="#c3c7cf" stroke-width="3.2"/></svg>
<svg style="left:2469px;top:270px;" width="18" height="12" viewBox="0 0 18 12" fill="none"><path d="M2 10 L9 3 L16 10" stroke="#2ec4c8" stroke-width="2.4"/></svg>
<svg style="left:2945px;top:274px;" width="26" height="16" viewBox="0 0 26 16" fill="none"><path d="M3 3 L13 13 L23 3" stroke="#000" stroke-width="2.8"/></svg>
<svg style="left:2353px;top:459px;" width="26" height="16" viewBox="0 0 26 16" fill="none"><path d="M3 3 L12.5 12.5 L22 3" stroke="#1a6b3e" stroke-width="2.6"/></svg>
<svg style="left:2353px;top:745.5px;" width="26" height="16" viewBox="0 0 26 16" fill="none"><path d="M3 3 L12.5 12.5 L22 3" stroke="#2c5ec9" stroke-width="2.6"/></svg>
<svg style="left:2353px;top:1032px;" width="26" height="16" viewBox="0 0 26 16" fill="none"><path d="M3 3 L12.5 12.5 L22 3" stroke="#1a6b3e" stroke-width="2.6"/></svg>
<svg style="left:2358px;top:1338px;" width="24" height="16" viewBox="0 0 24 16" fill="none"><path d="M3 3 L12 12 L21 3" stroke="#333" stroke-width="2.4"/></svg>
<svg style="left:2353px;top:1851px;" width="24" height="16" viewBox="0 0 24 16" fill="none"><path d="M3 3 L12 12 L21 3" stroke="#111" stroke-width="2.4"/></svg>
<div style="left:1740px;top:1484px;width:27.5px;height:13.5px;border:2.2px solid #5d6370;border-top-width:5.5px;border-radius:3px;"></div>
<div style="left:1813px;top:1474.5px;width:27.5px;height:23.5px;border:2.2px solid #5d6370;border-top-width:6.5px;border-radius:3px;"></div>
<svg style="left:2863px;top:490px;" width="40" height="40" viewBox="0 0 40 40" fill="none"><circle cx="16.5" cy="16.5" r="13" stroke="#6f7683" stroke-width="2.5"/><path d="M26 26 L35.5 35.5" stroke="#6f7683" stroke-width="3.6"/></svg>
<div class="t" style="left:2940px;top:493px;font-size:34px;line-height:34px;color:#555;font-family:'Liberation Serif',serif;font-style:italic;">f<span style="font-size:22px">x</span></div>
<svg style="left:2958px;top:493px;" width="20" height="20" viewBox="0 0 20 20" fill="none"><path d="M10 2.5 V17.5 M2.5 10 H17.5" stroke="#2c6fec" stroke-width="3.4"/></svg>
<svg style="left:2483.5px;top:641.9px;" width="26" height="25" viewBox="0 0 26 25" fill="none"><path d="M2.8 8.2 V1.3 H22.6 V8.2 M13.1 1.3 V21.4 M6.5 21.4 H19" stroke="#2c6fec" stroke-width="2.7"/></svg>
<svg style="left:2483.5px;top:696.9499999999999px;" width="26" height="25" viewBox="0 0 26 25" fill="none"><path d="M2.8 8.2 V1.3 H22.6 V8.2 M13.1 1.3 V21.4 M6.5 21.4 H19" stroke="#2c6fec" stroke-width="2.7"/></svg>
<svg style="left:2483.5px;top:752.0px;" width="26" height="25" viewBox="0 0 26 25" fill="none"><path d="M2.8 8.2 V1.3 H22.6 V8.2 M13.1 1.3 V21.4 M6.5 21.4 H19" stroke="#2c6fec" stroke-width="2.7"/></svg>
<svg style="left:2482px;top:805.55px;" width="28" height="28" viewBox="0 0 28 28" fill="none"><rect x="2.3" y="5.75" width="22.3" height="19.9" rx="5" stroke="#2c6fec" stroke-width="2.6"/><path d="M2.5 10.25 H24.5 M7.2 1.4 V6 M19.7 1.4 V6" stroke="#2c6fec" stroke-width="2.6"/><g fill="#2c6fec"><rect x="13.5" y="14.2" width="2.6" height="2.6"/><rect x="18.4" y="14.2" width="2.6" height="2.6"/><rect x="8.2" y="19.5" width="2.6" height="2.6"/><rect x="13.5" y="19.5" width="2.6" height="2.6"/><rect x="18.4" y="19.5" width="2.6" height="2.6"/></g></svg>
<svg style="left:2483.5px;top:862.0999999999999px;" width="26" height="25" viewBox="0 0 26 25" fill="none"><path d="M2.8 8.2 V1.3 H22.6 V8.2 M13.1 1.3 V21.4 M6.5 21.4 H19" stroke="#2c6fec" stroke-width="2.7"/></svg>
<svg style="left:2483.5px;top:917.15px;" width="26" height="25" viewBox="0 0 26 25" fill="none"><path d="M2.8 8.2 V1.3 H22.6 V8.2 M13.1 1.3 V21.4 M6.5 21.4 H19" stroke="#2c6fec" stroke-width="2.7"/></svg>
<svg style="left:2483.5px;top:972.1999999999999px;" width="26" height="25" viewBox="0 0 26 25" fill="none"><path d="M2.8 8.2 V1.3 H22.6 V8.2 M13.1 1.3 V21.4 M6.5 21.4 H19" stroke="#2c6fec" stroke-width="2.7"/></svg>
<svg style="left:2483.5px;top:1027.25px;" width="26" height="25" viewBox="0 0 26 25" fill="none"><path d="M2.8 8.2 V1.3 H22.6 V8.2 M13.1 1.3 V21.4 M6.5 21.4 H19" stroke="#2c6fec" stroke-width="2.7"/></svg>
<svg style="left:2482px;top:1080.8px;" width="28" height="28" viewBox="0 0 28 28" fill="none"><rect x="2.3" y="5.75" width="22.3" height="19.9" rx="5" stroke="#2c6fec" stroke-width="2.6"/><path d="M2.5 10.25 H24.5 M7.2 1.4 V6 M19.7 1.4 V6" stroke="#2c6fec" stroke-width="2.6"/><g fill="#2c6fec"><rect x="13.5" y="14.2" width="2.6" height="2.6"/><rect x="18.4" y="14.2" width="2.6" height="2.6"/><rect x="8.2" y="19.5" width="2.6" height="2.6"/><rect x="13.5" y="19.5" width="2.6" height="2.6"/><rect x="18.4" y="19.5" width="2.6" height="2.6"/></g></svg>
<svg style="left:2483.5px;top:1137.35px;" width="26" height="25" viewBox="0 0 26 25" fill="none"><path d="M2.8 8.2 V1.3 H22.6 V8.2 M13.1 1.3 V21.4 M6.5 21.4 H19" stroke="#2c6fec" stroke-width="2.7"/></svg>
<svg style="left:2483.5px;top:1192.4px;" width="26" height="25" viewBox="0 0 26 25" fill="none"><path d="M2.8 8.2 V1.3 H22.6 V8.2 M13.1 1.3 V21.4 M6.5 21.4 H19" stroke="#2c6fec" stroke-width="2.7"/></svg>
<svg style="left:2481px;top:1324.8999999999999px;" width="28" height="28" viewBox="0 0 28 28" fill="none"><path d="M10.2 1.3 V25.9 M17.5 1.3 V25.9 M1.3 9.8 H26.3 M1.3 17.3 H26.3" stroke="#1bbd7b" stroke-width="2.7"/></svg>
<svg style="left:2481px;top:1379.9999999999998px;" width="28" height="28" viewBox="0 0 28 28" fill="none"><path d="M10.2 1.3 V25.9 M17.5 1.3 V25.9 M1.3 9.8 H26.3 M1.3 17.3 H26.3" stroke="#1bbd7b" stroke-width="2.7"/></svg>
<svg style="left:2481px;top:1435.1px;" width="28" height="28" viewBox="0 0 28 28" fill="none"><path d="M10.2 1.3 V25.9 M17.5 1.3 V25.9 M1.3 9.8 H26.3 M1.3 17.3 H26.3" stroke="#1bbd7b" stroke-width="2.7"/></svg>
<svg style="left:2481px;top:1490.1999999999998px;" width="28" height="28" viewBox="0 0 28 28" fill="none"><path d="M10.2 1.3 V25.9 M17.5 1.3 V25.9 M1.3 9.8 H26.3 M1.3 17.3 H26.3" stroke="#1bbd7b" stroke-width="2.7"/></svg>
<svg style="left:2481px;top:1545.3px;" width="28" height="28" viewBox="0 0 28 28" fill="none"><path d="M10.2 1.3 V25.9 M17.5 1.3 V25.9 M1.3 9.8 H26.3 M1.3 17.3 H26.3" stroke="#1bbd7b" stroke-width="2.7"/></svg>
<svg style="left:2481px;top:1600.3999999999999px;" width="28" height="28" viewBox="0 0 28 28" fill="none"><path d="M10.2 1.3 V25.9 M17.5 1.3 V25.9 M1.3 9.8 H26.3 M1.3 17.3 H26.3" stroke="#1bbd7b" stroke-width="2.7"/></svg>
<svg style="left:2481px;top:1655.5px;" width="28" height="28" viewBox="0 0 28 28" fill="none"><path d="M10.2 1.3 V25.9 M17.5 1.3 V25.9 M1.3 9.8 H26.3 M1.3 17.3 H26.3" stroke="#1bbd7b" stroke-width="2.7"/></svg>
<svg style="left:2481px;top:1710.6px;" width="28" height="28" viewBox="0 0 28 28" fill="none"><path d="M10.2 1.3 V25.9 M17.5 1.3 V25.9 M1.3 9.8 H26.3 M1.3 17.3 H26.3" stroke="#1bbd7b" stroke-width="2.7"/></svg>
<svg style="left:2481px;top:1765.6999999999998px;" width="28" height="28" viewBox="0 0 28 28" fill="none"><path d="M10.2 1.3 V25.9 M17.5 1.3 V25.9 M1.3 9.8 H26.3 M1.3 17.3 H26.3" stroke="#1bbd7b" stroke-width="2.7"/></svg>
<svg style="left:2481px;top:1820.8px;" width="28" height="28" viewBox="0 0 28 28" fill="none"><path d="M10.2 1.3 V25.9 M17.5 1.3 V25.9 M1.3 9.8 H26.3 M1.3 17.3 H26.3" stroke="#1bbd7b" stroke-width="2.7"/></svg>
<svg style="left:2481px;top:1875.8999999999999px;" width="28" height="28" viewBox="0 0 28 28" fill="none"><path d="M10.2 1.3 V25.9 M17.5 1.3 V25.9 M1.3 9.8 H26.3 M1.3 17.3 H26.3" stroke="#1bbd7b" stroke-width="2.7"/></svg>
<div style="left:2837.6px;top:1731.8px;width:120.2px;height:120.2px;background:#000;border-radius:50%;box-shadow:0 0 30px rgba(0,0,0,0.07);"></div>
<svg style="left:2860px;top:1750px;" width="80" height="80" viewBox="0 0 80 80" fill="none"><path d="M16.9 11.9 H59.3 Q64.3 11.9 64.3 16.9 V71.9 L48 65.7 H16.9 Q11.9 65.7 11.9 60.7 V16.9 Q11.9 11.9 16.9 11.9 Z" fill="#fff"/><path d="M20 50 Q38.1 64 56.2 50" stroke="#000" stroke-width="3.6" stroke-linecap="round"/></svg>
<svg style="left:990px;top:1025px;" width="44" height="50" viewBox="0 0 44 50" fill="none"><defs><filter id="cs" x="-50%" y="-50%" width="200%" height="200%"><feGaussianBlur stdDeviation="1.6"/></filter></defs><path d="M12.2 13.6 L12.2 36.1 L17.6 31.4 L22.2 42.5 L26 41 L21.9 30.2 L29 30.2 Z" fill="rgba(0,0,0,0.35)" stroke="rgba(0,0,0,0.35)" stroke-width="3" filter="url(#cs)"/><path d="M12.2 11.1 L12.2 33.6 L17.6 28.9 L22.2 40 L26 38.5 L21.9 27.7 L29 27.7 Z" fill="#000" stroke="#fff" stroke-width="2.6" stroke-linejoin="round" paint-order="stroke"/></svg>
<svg style="left:0px;top:1880px;" width="24" height="22" viewBox="0 0 24 22" fill="none"><path d="M0 0 V22 H24 V22 H15.5 A15.5 15.5 0 0 1 0 6.5 Z" fill="#acacac"/><path d="M0.6 5.5 A15.8 15.8 0 0 0 16.5 21.6" stroke="#111" stroke-width="1.6"/></svg>
<svg style="left:2984px;top:1880px;" width="24" height="22" viewBox="0 0 24 22" fill="none"><path d="M24 0 V22 H0 V22 H8.5 A15.5 15.5 0 0 0 24 6.5 Z" fill="#9a9a9a"/><path d="M23.4 5.5 A15.8 15.8 0 0 1 7.5 21.6" stroke="#111" stroke-width="1.6"/></svg>
</body></html>
